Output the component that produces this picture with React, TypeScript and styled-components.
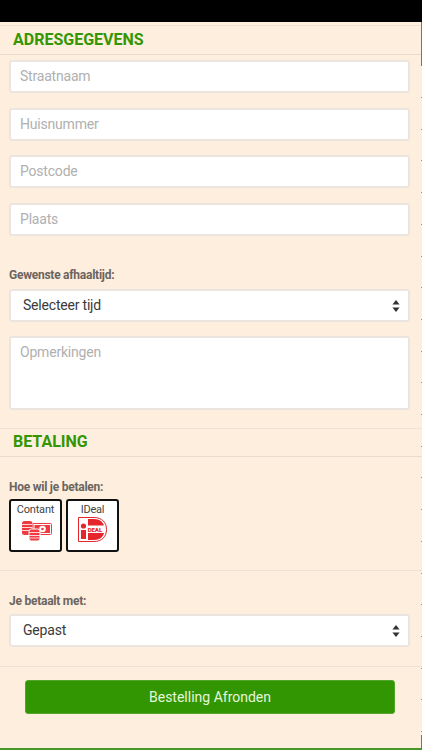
import React from "react";
import styled, { createGlobalStyle } from "styled-components";

const Global = createGlobalStyle`
  html, body { margin: 0; padding: 0; height: 100%; background: #feeede; }
  #root { height: 100%; }
  * { box-sizing: border-box; }
`;

const Page = styled.div`
  width: 422px;
  height: 750px;
  overflow: hidden;
  position: relative;
  background: #feeede;
  font-family: Roboto, "Liberation Sans", sans-serif;
  color: #333;
`;
const StatusBar = styled.div`
  height: 22px;
  background: #000;
`;
const Form = styled.form`
  display: flex;
  flex-direction: column;
  padding: 3px 0 0;
`;
const SectionHeader = styled.h2<{ $mt?: number; $mb: number; $h: number; $lh: number }>`
  margin: ${(p) => p.$mt ?? 0}px 0 ${(p) => p.$mb}px;
  height: ${(p) => p.$h}px;
  border-top: 1px solid #f0e2d3;
  border-bottom: 1px solid #eadccd;
  padding-left: 13px;
  font-size: 16px;
  line-height: ${(p) => p.$lh}px;
  font-weight: 700;
  color: #339602;
`;
const Fields = styled.div`
  display: flex;
  flex-direction: column;
  padding: 0 12px 0 9px;
`;
const TextInput = styled.input<{ $mb?: number }>`
  display: block;
  width: 401px;
  height: 33px;
  margin-bottom: ${(p) => p.$mb ?? 15}px;
  padding: 0 9px 2px;
  background: #fff;
  border: 2px solid #ebe4df;
  border-radius: 3px;
  outline: none;
  font: 400 14px Roboto, sans-serif;
  letter-spacing: -0.2px;
  &::placeholder { color: #b0b0b0; opacity: 1; }
`;
const Notes = styled.textarea`
  display: block;
  width: 401px;
  height: 74px;
  padding: 6px 9px;
  background: #fff;
  border: 2px solid #ebe4df;
  border-radius: 3px;
  outline: none;
  resize: none;
  font: 400 14px Roboto, sans-serif;
  letter-spacing: -0.2px;
  &::placeholder { color: #b0b0b0; opacity: 1; }
`;
const Label = styled.label`
  display: block;
  font-size: 12px;
  line-height: 14px;
  font-weight: 700;
  letter-spacing: -0.25px;
  color: #6b6560;
`;
const SelectBox = styled.div<{ $mt: number; $mb?: number }>`
  display: flex;
  align-items: center;
  justify-content: space-between;
  width: 401px;
  height: 33px;
  margin: ${(p) => p.$mt}px 0 ${(p) => p.$mb ?? 0}px;
  padding: 0 8px 1px 12px;
  background: #fff;
  border: 2px solid #ebe4df;
  border-radius: 3px;
  font-size: 14px;
  letter-spacing: -0.2px;
  color: #3a3a3a;
  svg { margin-top: 1px; }
`;
const PayRow = styled.div`
  display: flex;
  gap: 4px;
  margin-top: 5px;
`;
const PayButton = styled.button<{ $gap: number }>`
  display: flex;
  flex-direction: column;
  align-items: center;
  width: 53px;
  height: 53px;
  padding: 2px 0 0;
  background: #fff;
  border: 2px solid #111;
  border-radius: 3px;
  font: 400 11px/13px Roboto, sans-serif;
  letter-spacing: -0.2px;
  color: #444;
  svg { margin-top: ${(p) => p.$gap}px; }
`;
const Rule = styled.hr<{ $mt: number; $mb: number }>`
  margin: ${(p) => p.$mt}px 0 ${(p) => p.$mb}px;
  border: 0;
  border-top: 1px solid #efe0d1;
`;
const Submit = styled.button`
  display: block;
  width: 370px;
  height: 34px;
  margin-left: 25px;
  padding-bottom: 2px;
  background: #329502;
  border: 1px solid #52a52a;
  border-radius: 3px;
  font: 400 14px Roboto, sans-serif;
  color: #e6f6dc;
`;
const BottomLine = styled.div`
  position: absolute;
  left: 0;
  right: 0;
  bottom: 0;
  height: 2px;
  background: #46962a;
`;
const EdgeLine = styled.div<{ $top: number; $h: number }>`
  position: absolute;
  right: 0;
  top: ${(p) => p.$top}px;
  width: 1px;
  height: ${(p) => p.$h}px;
  background: #4a9a2c;
`;
const EdgeTicks = styled.div`
  position: absolute;
  right: 0;
  top: 97px;
  width: 1px;
  height: 636px;
  background: repeating-linear-gradient(to bottom, #8f9c80 0 1px, transparent 1px 31.7px);
`;

const Chevrons = () => (
  <svg width="8" height="12" viewBox="0 0 8 12" fill="#333" aria-hidden="true">
    <path d="M4 0 L7.600 4.400 H.4 Z" />
    <path d="M4 12 L.4 7.600 H7.600 Z" />
  </svg>
);

const CashIcon = () => (
  <svg width="32" height="21" viewBox="0 0 32 21" aria-hidden="true">
    <rect x="13" y="3.500" width="18.500" height="11" rx="1" fill="#fff" stroke="#ee3a40" />
    <rect x="14.500" y="5" width="15.500" height="8" fill="#ee3a40" />
    <circle cx="22.500" cy="9" r="3.300" fill="#fff" />
    <circle cx="22.500" cy="9" r="1.300" fill="#ee3a40" />
    <rect x="2" y="1" width="10.500" height="14" rx="2.500" fill="#ee3a40" />
    <path d="M2 4.500h10.500M2 7.500h10.500M2 10.500h10.500" stroke="#fff" strokeWidth="0.8" />
    <rect x="9" y="9" width="11" height="12" rx="2.500" fill="#ee3a40" stroke="#fff" />
    <path d="M9 12.500h11M9 15.500h11M9 18h11" stroke="#fff" strokeWidth="0.8" />
  </svg>
);

const IdealIcon = () => (
  <svg width="29" height="25" viewBox="0 0 29 25" aria-hidden="true">
    <path d="M.5.5H16C24 .5 28.500 5.500 28.500 12.500S24 24.500 16 24.500H.5Z" fill="#fff" stroke="#e5252c" />
    <path d="M10 2H16C22.500 2 26.500 6 26.500 12.500S22.500 23 16 23H10Z" fill="#e5252c" />
    <rect x="2" y="2" width="8" height="21" fill="#fff" />
    <circle cx="5.500" cy="9" r="2.600" fill="#e5252c" />
    <rect x="3" y="13" width="5" height="9" fill="#e5252c" />
    <rect x="9" y="8.500" width="18" height="7.500" fill="#fff" />
    <text x="9.800" y="14.500" fontFamily="Roboto, sans-serif" fontSize="6.200" fontWeight="900" fill="#e5252c">DEAL</text>
  </svg>
);

export default function App() {
  return (
    <Page>
      <Global />
      <StatusBar />
      <Form onSubmit={(e) => e.preventDefault()}>
        <SectionHeader $mb={5} $h={30} $lh={27}>ADRESGEGEVENS</SectionHeader>
        <Fields>
          <TextInput placeholder="Straatnaam" />
          <TextInput placeholder="Huisnummer" $mb={14} />
          <TextInput placeholder="Postcode" />
          <TextInput placeholder="Plaats" $mb={32} />
          <Label>Gewenste afhaaltijd:</Label>
          <SelectBox $mt={7} $mb={14}>
            Selecteer tijd
            <Chevrons />
          </SelectBox>
          <Notes placeholder="Opmerkingen" />
        </Fields>
        <SectionHeader $mt={18} $mb={23} $h={29} $lh={25}>BETALING</SectionHeader>
        <Fields>
          <Label>Hoe wil je betalen:</Label>
          <PayRow>
            <PayButton type="button" $gap={4}>
              Contant
              <CashIcon />
            </PayButton>
            <PayButton type="button" $gap={1}>
              IDeal
              <IdealIcon />
            </PayButton>
          </PayRow>
        </Fields>
        <Rule $mt={18} $mb={23} />
        <Fields>
          <Label>Je betaalt met:</Label>
          <SelectBox $mt={6}>
            Gepast
            <Chevrons />
          </SelectBox>
        </Fields>
        <Rule $mt={19} $mb={13} />
        <Submit type="submit">Bestelling Afronden</Submit>
      </Form>
      <EdgeLine $top={22} $h={44} />
      <EdgeTicks />
      <EdgeLine $top={735} $h={15} />
      <BottomLine />
    </Page>
  );
}
